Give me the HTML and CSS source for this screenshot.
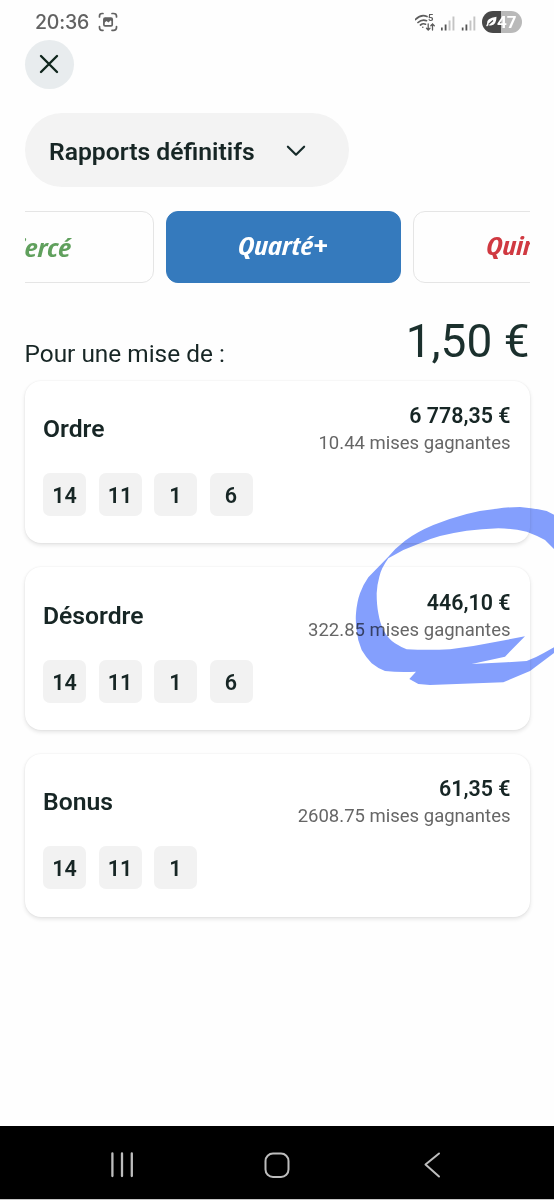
FILE: index.html
```html
<!DOCTYPE html>
<html lang="fr">
<head>
<meta charset="utf-8">
<title>Rapports définitifs</title>
<link rel="stylesheet" href="styles.css">
</head>
<body>
<div class="screen">
  <header class="status">
    <span class="clock">20:36</span>
    <svg class="capture" width="20" height="20" viewBox="0 0 20 20" fill="none" stroke="#626262" stroke-width="1.7" stroke-linecap="round"><path d="M1.5 5V4Q1.5 1.500 4 1.500H5M14 1.500H15.500Q18.500 1.500 18.500 4V5M18.500 14.500V15.500Q18.500 18.300 15.500 18.300H14M5 18.300H4Q1.500 18.300 1.500 15.500V14.500"/><rect x="5.900" y="6.100" width="8.300" height="7.800" rx="1.200"/><path d="M6 6.500H14V9L12.500 8.500L10.500 10.500L8.500 9L6 11Z" fill="#626262" stroke="none"/></svg>
    <div class="signals">
      <svg width="66" height="20" viewBox="0 0 66 20" fill="none" stroke="#5c5c5c" stroke-width="1.700" stroke-linecap="round"><path d="M.5 7.500Q6 2 12 4.500M3 10.500Q7 6.800 11.500 8.700M5.500 13Q8 11 10.500 12.200"/><circle cx="7.800" cy="15.200" r=".8" fill="#5c5c5c" stroke="none"/><path d="M13.200 12V18M11.500 16.300L13.200 18L15 16.300M17.500 18V12M15.800 13.800L17.500 12L19.300 13.800" stroke-width="1.300"/><text class="wifi-gen" x="13" y="9">5</text>
        <g stroke="none"><path d="M26 15.500h1.700v3H26zM29.700 12.500h1.800v6h-1.800zM46.800 15.500h1.700v3h-1.700zM50.500 12.500h1.800v6h-1.800z" fill="#555"/><path d="M33.600 8.500h1.900v10h-1.900zM37.500 4.500h1.900v14h-1.900zM54.500 8.500h1.900v10h-1.900zM58.400 4.500h1.900v14h-1.900z" fill="#c4c4c4"/></g></svg>
      <div class="battery"><svg width="11" height="11" viewBox="0 0 11 11"><path d="M1 8Q0 2 10.500 .8Q10.500 9 5 9.600Q3.500 9.700 2.500 9L1 10.500L.2 9.700Z" fill="#fff"/><path d="M2.500 8.500L7 4.500" stroke="#484848" stroke-width="1.200"/></svg><span>47</span></div>
    </div>
  </header>

  <main class="content">
    <button class="close" aria-label="Fermer"><svg width="22" height="22" viewBox="0 0 22 22" fill="none" stroke="#10261d" stroke-width="2.400" stroke-linecap="round"><path d="M3 3L19 19M19 3L3 19"/></svg></button>
    <button class="select"><span>Rapports définitifs</span><svg width="20" height="12" viewBox="0 0 20 12" fill="none" stroke="#172b2a" stroke-width="2.200" stroke-linecap="round" stroke-linejoin="round"><path d="M1.900 1.700L10 9.700L18.100 1.700"/></svg></button>

    <nav class="tabs">
      <div class="tab tierce"><span>Tiercé</span></div>
      <div class="tab quarte"><span>Quarté+</span></div>
      <div class="tab quinte"><span>Quinté+</span></div>
    </nav>

    <div class="stake"><span class="stake-label">Pour une mise de :</span><span class="stake-value">1,50 €</span></div>

    <section class="cards">
      <article class="card">
        <div class="row"><h2>Ordre</h2><div class="gain"><strong>6 778,35 €</strong><span>10.44 mises gagnantes</span></div></div>
        <div class="chips"><b>14</b><b>11</b><b>1</b><b>6</b></div>
      </article>
      <article class="card">
        <div class="row"><h2>Désordre</h2><div class="gain"><strong>446,10 €</strong><span>322.85 mises gagnantes</span></div></div>
        <div class="chips"><b>14</b><b>11</b><b>1</b><b>6</b></div>
      </article>
      <article class="card">
        <div class="row"><h2>Bonus</h2><div class="gain"><strong>61,35 €</strong><span>2608.75 mises gagnantes</span></div></div>
        <div class="chips"><b>14</b><b>11</b><b>1</b></div>
      </article>
    </section>
  </main>

  <footer class="system-nav">
    <svg viewBox="0 0 554 73" width="554" height="73" fill="none" stroke="#bdbdbd" stroke-width="2" stroke-linecap="round" stroke-linejoin="round"><path d="M112.400 27.500V50M122 27.500V50M131.800 27.500V50" stroke-width="2.300"/><rect x="265.500" y="27.500" width="23" height="23.500" rx="7.500"/><path d="M439 27.500L425.500 38.500L439 50.500"/></svg>
  </footer>

  <svg class="marker" width="214" height="210" viewBox="0 0 642 630"><path d="M145 200Q165 175 195 152Q230 126 280 105Q330 85 380 72Q425 60 470 56Q505 51 540 51Q580 54 620 63L645 76V180L615 150Q590 136 560 125Q515 115 475 115Q425 117 380 122Q340 128 300 138Q270 146 240 160L190 180L145 205Q123 236 118 260Q111 285 110 310Q110 345 115 370Q120 400 130 420Q145 447 165 460Q182 471 200 478Q265 481 330 478L400 468L555 439L495 500L395 522L500 517L560 513Q590 502 610 490L645 470V487L570 543L490 577L270 585L235 582L208 567L228 545Q180 548 135 543Q113 535 95 520Q78 502 65 480Q52 450 50 420Q46 393 48 370Q51 335 60 310Q70 283 85 262Z"/></svg>
</div>
</body>
</html>
```
FILE: styles.css
```css
* { box-sizing: border-box; }
body { margin: 0; background: #fefefe; font-family: Roboto, "Liberation Sans", sans-serif; color: #172625; }
button { border: 0; font: inherit; color: inherit; padding: 0; }
svg { display: block; flex: none; }
.screen { position: relative; width: 554px; height: 1200px; overflow: hidden; display: flex; flex-direction: column; background: #fefefe; border-bottom: 1px solid #c8c8c8; }
.status { height: 39.500px; flex: none; display: flex; align-items: center; padding: 4px 32px 0 35px; color: #626262; }
.clock { font-family: Inter, sans-serif; font-weight: 500; font-size: 19.500px; letter-spacing: -.2px; width: 63px; }
.signals { display: flex; margin-left: auto; align-items: center; gap: 1px; }
.wifi-gen { font: 700 9.500px Roboto, sans-serif; fill: #5c5c5c; stroke: none; }
.battery { width: 40px; height: 22px; border-radius: 11px; background: linear-gradient(90deg, #484848 47%, #b9b9b9 47%); display: flex; align-items: center; padding-left: 4px; color: #fff; font: 700 17px Roboto, sans-serif; }
.content { flex: 1; padding: 0 24.500px; }
.close { display: grid; place-items: center; width: 49px; height: 49px; border-radius: 50%; background: #e8ecee; }
.select { display: flex; align-items: center; justify-content: space-between; width: 324px; height: 74px; margin-top: 24.500px; padding: 3px 42.500px 0 24.500px; border-radius: 37px; background: #f3f3f3; font-size: 24.700px; font-weight: 600; }
.select span { white-space: nowrap; }
.select svg { margin-top: -2px; }
.tabs { display: flex; justify-content: center; gap: 12px; overflow: hidden; margin-top: 24px; }
.tab { width: 235px; height: 71.500px; flex: none; display: grid; place-items: center; border: 1.500px solid #e5e5e5; border-radius: 12px; font: italic 700 25px "Open Sans", sans-serif; font-stretch: 75%; }
.tab span { transform: scaleX(1.22); }
.tierce { color: #60a05d; margin-left: 12px; padding: 0 0 0 5px; }
.quarte { color: #fff; background: #357abd; border-color: #357abd; padding-bottom: 4px; }
.quinte { color: #d03941; padding-bottom: 4px; }
.stake { display: flex; justify-content: space-between; height: 98px; }
.stake-label { font-size: 24.400px; margin-top: 56px; }
.stake-value { font-size: 46px; margin-top: 31px; color: #1b302d; }
.cards { display: flex; flex-direction: column; gap: 24px; }
.card { height: 162.700px; padding: 21.500px 19px 0 18.500px; border-radius: 16px; background: #fff; box-shadow: 0 2px 4px #0000001c, 0 0 2px #00000010; }
.row { display: flex; justify-content: space-between; height: 71px; }
h2 { margin: 13px 0 0; font-size: 24.700px; line-height: 28px; font-weight: 600; }
.gain { display: flex; flex-direction: column; align-items: flex-end; }
.gain strong { font-size: 21.400px; line-height: 28px; font-weight: 600; }
.gain span { color: #666; font-size: 18.500px; line-height: 26px; }
.chips { display: flex; gap: 12.500px; }
.chips b { display: grid; place-items: center; width: 43px; height: 43px; padding-top: 2px; border-radius: 7px; background: #f2f2f2; font-size: 21.500px; font-weight: 600; }
.system-nav { height: 73px; flex: none; background: #000; }
.marker { position: absolute; left: 340px; top: 490px; mix-blend-mode: multiply; fill: #849ffd; }
```
